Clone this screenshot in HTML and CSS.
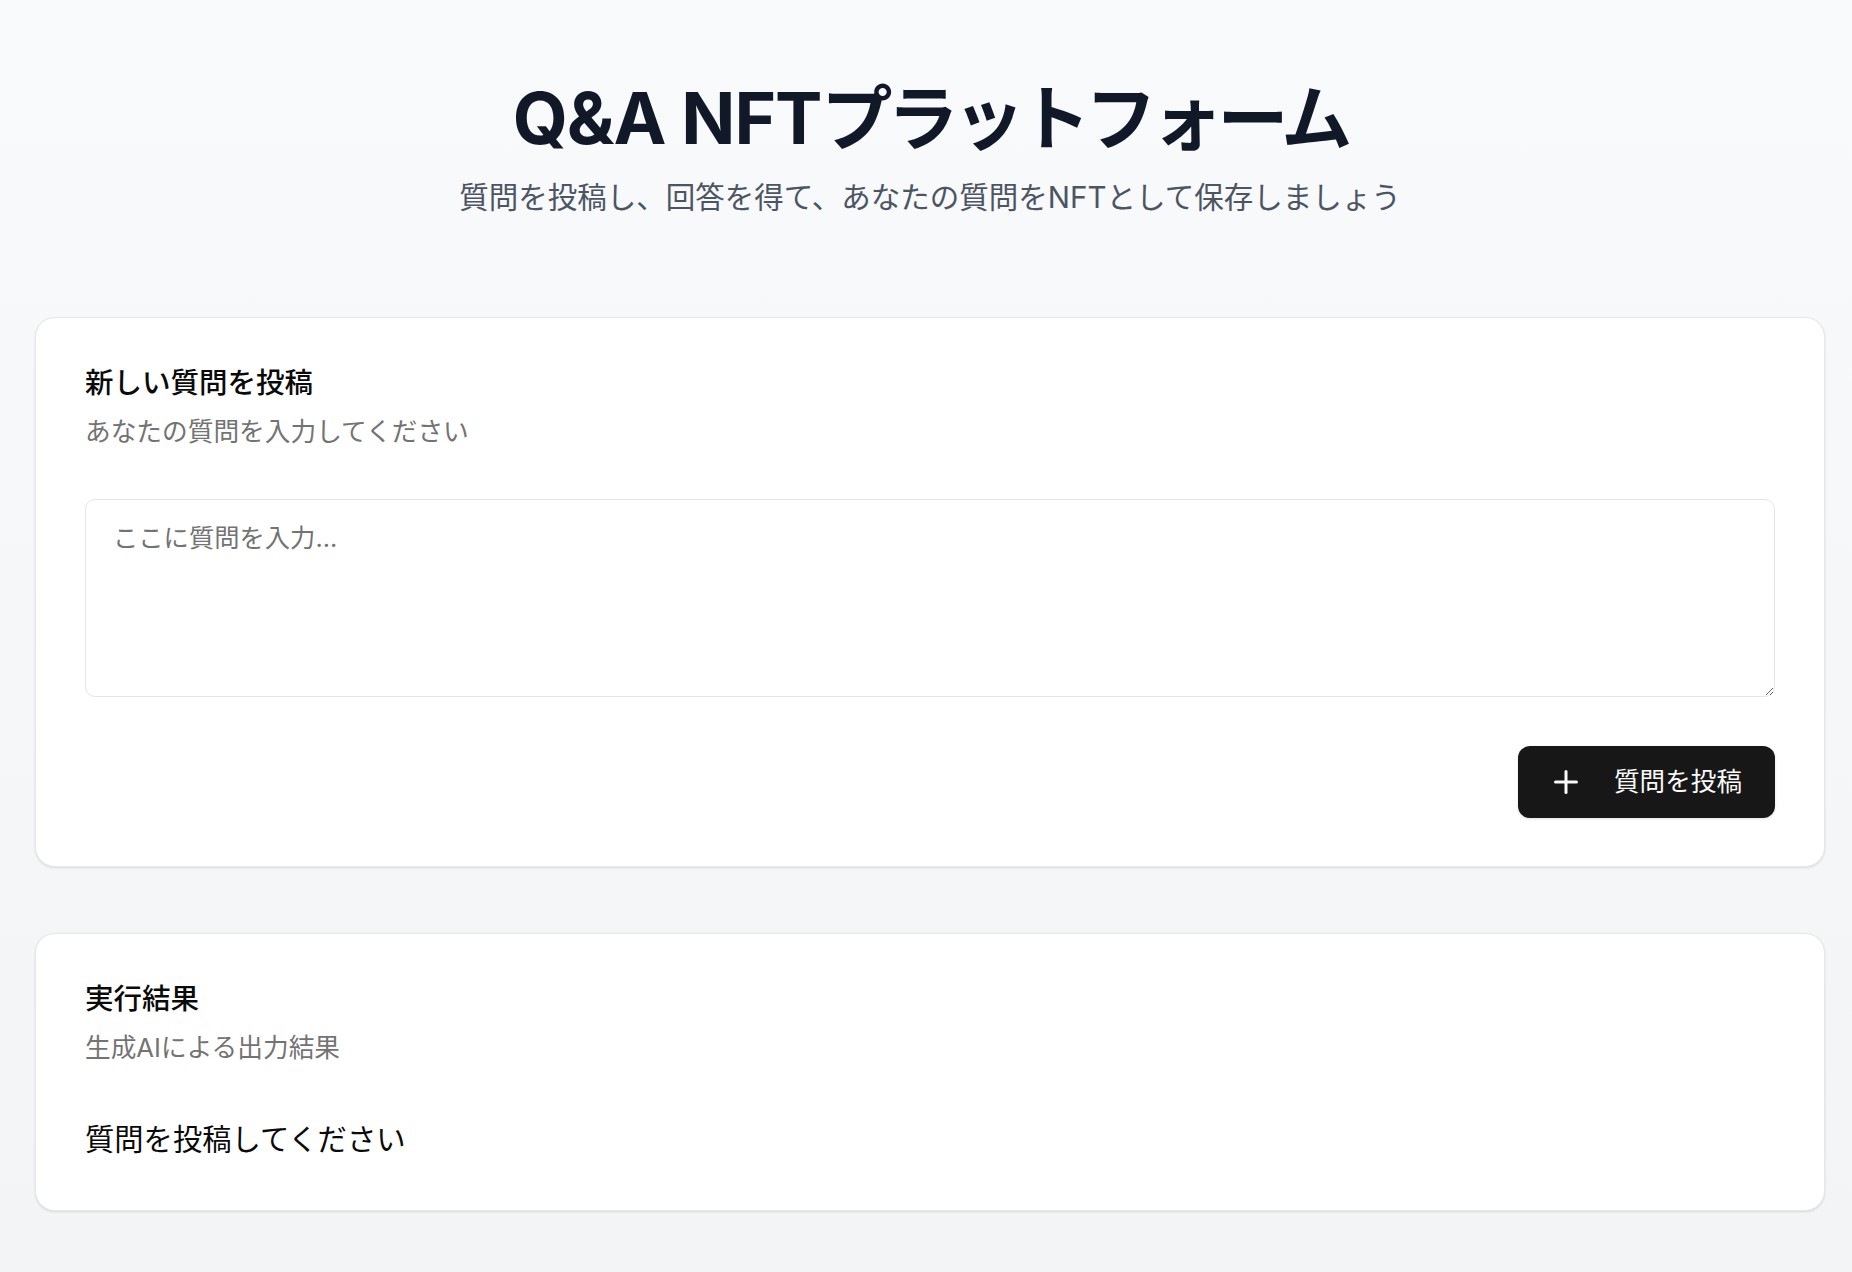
FILE: index.html
```html
<!DOCTYPE html>
<html lang="ja">
<head>
<meta charset="utf-8">
<title>Q&amp;A NFTプラットフォーム</title>
<link rel="stylesheet" href="styles.css">
</head>
<body>
<main class="page">
  <header class="hero">
    <h1 class="hero-title"><span class="hero-latin">Q&amp;A NFT</span>プラットフォーム</h1>
    <p class="hero-sub">質問を投稿し、回答を得て、あなたの質問をNFTとして保存しましょう</p>
  </header>
  <div class="stack">
    <section class="card">
      <div class="card-header">
        <h2 class="card-title">新しい質問を投稿</h2>
        <p class="card-desc">あなたの質問を入力してください</p>
      </div>
      <div class="card-content">
        <textarea class="textarea" placeholder="ここに質問を入力..."></textarea>
        <div class="actions">
          <button class="btn" type="button">
            <svg class="btn-icon" viewBox="0 0 24 24" fill="none" stroke="currentColor" stroke-width="2" stroke-linecap="round" stroke-linejoin="round"><path d="M5 12h14"/><path d="M12 5v14"/></svg>
            <span>質問を投稿</span>
          </button>
        </div>
      </div>
    </section>
    <section class="card card-result">
      <div class="card-header">
        <h2 class="card-title">実行結果</h2>
        <p class="card-desc">生成AIによる出力結果</p>
      </div>
      <div class="card-content">
        <p class="result">質問を投稿してください</p>
      </div>
    </section>
  </div>
</main>
</body>
</html>
```
FILE: styles.css
```css
html, body {
  margin: 0;
}
body {
  font-family: Inter, "Noto Sans CJK JP", sans-serif;
  background: linear-gradient(to bottom, #f9fafb, #f3f4f6);
  min-height: 100vh;
  color: #0a0a0a;
}
.page {
  box-sizing: border-box;
  padding: 78px 27px 40px 35px;
}
.hero {
  text-align: center;
  margin-bottom: 100px;
}
.hero-title {
  margin: 0;
  font-size: 71px;
  line-height: 80px;
  font-weight: 700;
  letter-spacing: -5px;
  color: #111827;
}
.hero-latin {
  letter-spacing: -1px;
}
.hero-sub {
  margin: 19px 0 0;
  font-size: 29.5px;
  line-height: 40px;
  color: #4b5563;
}
.stack {
  display: flex;
  flex-direction: column;
  gap: 66px;
}
.card {
  background: #ffffff;
  border: 1px solid #e5e7eb;
  border-radius: 20px;
  box-shadow: 0 1px 3px rgba(0, 0, 0, 0.08), 0 1px 2px rgba(0, 0, 0, 0.04);
  padding: 47px 49px 48px;
}
.card-result {
  padding-bottom: 45px;
}
.card-header {
  display: flex;
  flex-direction: column;
  gap: 13px;
  margin-bottom: 49px;
}
.card-title {
  margin: 0;
  font-size: 28.5px;
  line-height: 36px;
  font-weight: 500;
  color: #0a0a0a;
}
.card-desc {
  margin: 0;
  font-size: 25.7px;
  line-height: 36px;
  color: #737373;
}
.textarea {
  display: block;
  box-sizing: border-box;
  width: 100%;
  height: 198px;
  padding: 20px 27px;
  border: 1px solid #e5e5e5;
  border-radius: 10px;
  font-family: inherit;
  font-size: 25.3px;
  line-height: 36px;
  color: #0a0a0a;
  background: #ffffff;
  resize: vertical;
  outline: none;
}
.textarea::placeholder {
  color: #737373;
}
.actions {
  display: flex;
  justify-content: flex-end;
  margin-top: 49px;
}
.btn {
  display: inline-flex;
  align-items: center;
  gap: 30px;
  height: 72px;
  padding: 0 33px 0 30px;
  border: none;
  border-radius: 12px;
  background: #171717;
  color: #fafafa;
  font-family: inherit;
  font-size: 25.6px;
  line-height: 1;
  box-shadow: 0 1px 3px rgba(0, 0, 0, 0.12);
  cursor: pointer;
}
.btn-icon {
  width: 36px;
  height: 36px;
  flex: none;
}
.result {
  margin: 0;
  font-size: 29.3px;
  line-height: 50px;
  color: #0a0a0a;
}
```
